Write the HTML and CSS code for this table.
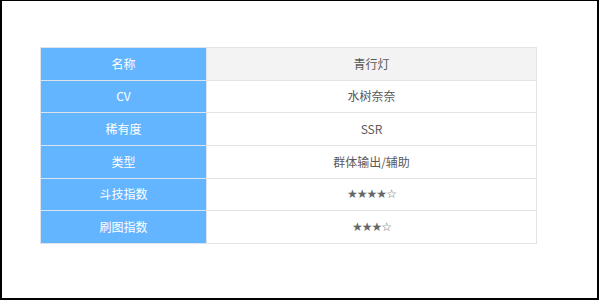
FILE: index.html
```html
<!DOCTYPE html>
<html lang="zh">
<head>
<meta charset="utf-8">
<link rel="stylesheet" href="styles.css">
</head>
<body>
<div class="frame">
  <table class="info">
    <tr><th>名称</th><td class="first">青行灯</td></tr>
    <tr><th>CV</th><td>水树奈奈</td></tr>
    <tr><th>稀有度</th><td>SSR</td></tr>
    <tr><th>类型</th><td>群体输出/辅助</td></tr>
    <tr><th>斗技指数</th><td class="stars">★★★★☆</td></tr>
    <tr><th>刷图指数</th><td class="stars">★★★☆</td></tr>
  </table>
</div>
</body>
</html>
```

FILE: styles.css
```css
html, body {
  margin: 0;
  padding: 0;
  background: #fff;
}
.frame {
  width: 599px;
  height: 300px;
  box-sizing: border-box;
  border: 2px solid #000;
  border-top-width: 1px;
  padding: 46px 0 0 38px;
  font-family: "Noto Sans CJK SC", "Noto Sans", sans-serif;
  font-size: 12px;
}
.info {
  width: 497px;
  border-collapse: collapse;
  table-layout: fixed;
}
.info tr {
  height: 32.67px;
}
.info th, .info td {
  border: 1px solid #e3e3e3;
  padding: 0;
  text-align: center;
  vertical-align: middle;
  line-height: 16px;
}
.info th {
  width: 165px;
  background: #64b5ff;
  color: #fff;
  font-weight: normal;
  border-color: #dde3ea;
}
.info td {
  color: #5a5a5a;
  background: #fff;
}
.info td.first {
  background: #f3f3f3;
}
.info td.stars {
  color: #666;
  font-family: "DejaVu Sans", sans-serif;
  font-size: 12px;
  letter-spacing: -1px;
}
```
